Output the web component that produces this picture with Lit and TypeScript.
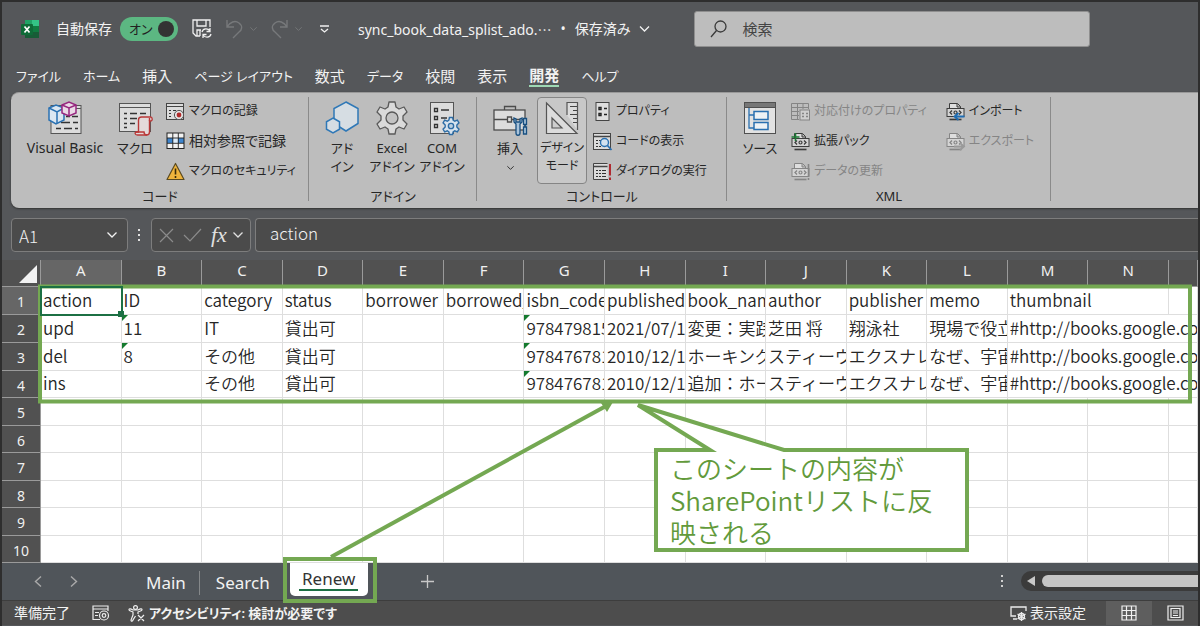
import { LitElement, html, css, svg, nothing, SVGTemplateResult } from "lit";
import { customElement } from "lit/decorators.js";
import { classMap } from "lit/directives/class-map.js";

type Cell = { t: string; span?: number; flag?: boolean };

const COLS = "ABCDEFGHIJKLMN".split("");

const c = (t: string, flag = false, span = 1): Cell => ({ t, flag, span });

const ROWS: Cell[][] = [
  [c("action"), c("ID"), c("category"), c("status"), c("borrower"), c("borrowed_"), c("isbn_code"),
   c("published"), c("book_nam"), c("author"), c("publisher"), c("memo"), c("thumbnail", false, 2), c("")],
  [c("upd"), c("11", true), c("IT"), c("貸出可"), c(""), c(""), c("978479815", true), c("2021/07/1"),
   c("変更：実践"), c("芝田 将"), c("翔泳社"), c("現場で役立"), c("#http://books.google.co", false, 3)],
  [c("del"), c("8", true), c("その他"), c("貸出可"), c(""), c(""), c("978476781", true), c("2010/12/1"),
   c("ホーキング"), c("スティーヴ"), c("エクスナレ"), c("なぜ、宇宙"), c("#http://books.google.co", false, 3)],
  [c("ins"), c(""), c("その他"), c("貸出可"), c(""), c(""), c("978476781", true), c("2010/12/1"),
   c("追加：ホー"), c("スティーヴ"), c("エクスナレ"), c("なぜ、宇宙"), c("#http://books.google.co", false, 3)],
];

const xmlDoc = (dim: boolean, extra: SVGTemplateResult) => {
  const k = dim ? "#858585" : "#3c3c3c";
  return svg`<path d="M3.5 6V1.5h8l3 3V6M11 1.5V5h3.500" fill="#dedede" stroke=${k}/>
    <rect x="1" y="6.500" width="17" height="8" fill="#d4d4d4" stroke=${k}/>
    <path d="M3.500 17.500h12" stroke=${k} stroke-width="1.600"/>
    <path d="M6 8.500 4 10.500l2 2M13 8.500l2 2-2 2" stroke=${k} stroke-width="1.300"/>
    <circle cx="9.500" cy="10.500" r="1.500" stroke=${k} stroke-width="1.200"/>${extra}`;
};

const GEAR = "M14 1h6l1 5 3 2 5-2 3 5-4 4v4l4 4-3 5-5-2-3 2-1 5h-6l-1-5-3-2-5 2-3-5 4-4v-4l-4-4 3-5 5 2 3-2z";

const I: Record<string, SVGTemplateResult> = {
  vb: svg`<rect x="3" y="4.500" width="30" height="28" fill="#dcdcdc" stroke="#555"/><path d="M3 7.500h30" stroke="#555"/>
    <path d="M18 15.500h4m2 0h6M13 21.500h9m3 0h5M8 27.500h5m3 0h8m3 0h3" stroke="#333" stroke-width="1.300"/>
    <path d="M1 7l7-3 8 3v12l-8 4-7-4z" fill="#dbe7f2" stroke="#2b72b3" stroke-width="1.500"/><path d="M1 7l8 4 7-4M9 11v11" stroke="#2b72b3" stroke-width="1.500"/>
    <path d="M14 4l7-3 7 3v8l-7 3-7-3z" fill="#ead9e6" stroke="#97277f" stroke-width="1.500"/><path d="M14 4l7 3 7-3M21 7v8" stroke="#97277f" stroke-width="1.500"/>`,
  macro: svg`<rect x="1.500" y="2.500" width="31" height="28" fill="#dcdcdc" stroke="#555"/><path d="M1.500 6.500h31" stroke="#555"/>
    <path d="M6 12.500h3m3 0h7m3 0h6M6 17.500h3m3 0h7M6 22.500h3m3 0h5M6 26.500h3" stroke="#333" stroke-width="1.300"/>
    <path d="M20.500 31V19c0-2 1-3 3-3h9c2 0 2.500 4 0 4h-1v11c0 2-1 3-3 3h-9c-3 0-3-3-1-3z" fill="#e4dada" stroke="#b93838" stroke-width="1.400"/><path d="M31.500 20v-3M18 31h8c0 2 1 3 3 3" stroke="#b93838" stroke-width="1.400"/>`,
  addin: svg`<path d="M21 1l12 6.500v15L21 30 9 22.500v-15z" fill="#d6dde3" stroke="#2f78b7" stroke-width="1.500"/><path d="M8 17l6.500 3.800v7.400L8 32l-6.500-3.800v-7.400z" fill="#d6dde3" stroke="#2f78b7" stroke-width="1.500"/>`,
  gear: svg`<path d=${GEAR} fill="#dadada" stroke="#595959" stroke-width="1.300" stroke-linejoin="round"/><circle cx="17" cy="17" r="6" fill="#c3c3c3" stroke="#595959" stroke-width="1.300"/>`,
  com: svg`<rect x="5.500" y="1.500" width="23" height="31" fill="#dcdcdc" stroke="#555"/>
    <path d="M9.500 7.500h3v3h-3zM9.500 15.500h3v3h-3zM9.500 23.500h3v3h-3z" stroke="#333" stroke-width="1.300"/><path d="M16 9h8M16 17h6" stroke="#333" stroke-width="1.300"/>
    <g transform="translate(17 16) scale(.53)"><path d=${GEAR} fill="#d7e3ee" stroke="#2d6da6" stroke-width="2.600"/><circle cx="17" cy="17" r="5" fill="#bdd0e0" stroke="#2d6da6" stroke-width="2.600"/></g>`,
  tools: svg`<path d="M11.500 9V5.500h11V9" stroke="#4c4c4c" stroke-width="1.300"/><rect x="1" y="9" width="31" height="20" fill="#dcdcdc" stroke="#4c4c4c" stroke-width="1.300"/>
    <path d="M1 18.500h13m5 0h13M14.500 16h4v5h-4z" stroke="#4c4c4c" stroke-width="1.300"/>
    <path d="M21 17v4l2 2v9c0 3 4 3 4 0v-9l2-2v-4l-2 1v3h-4v-3z" fill="#a9c3da" stroke="#174f80" stroke-width="1.300"/><path d="M30.500 17.500h3v6h-3zM32 23v3m-1.500 0h3v7h-3z" fill="#a9c3da" stroke="#174f80" stroke-width="1.300"/>`,
  design: svg`<path d="M22 14V1.500h10.500V29" fill="#dcdcdc" stroke="#555" stroke-width="1.200"/><path d="M25 5.500h7M28 9.500h4M25 13.500h7M28 17.500h4M28 21.500h4" stroke="#444"/>
    <path d="M1.500 2v30.500H32z" fill="#dcdcdc" stroke="#555" stroke-width="1.200"/><path d="M7 17v10h10z" fill="#cfcfcf" stroke="#555" stroke-width="1.200"/>`,
  source: svg`<rect x="1.500" y="1.500" width="31" height="31" fill="#e2e2e2" stroke="#505050"/><rect x="2" y="2" width="30" height="4" fill="#777"/><path d="M1.500 6.500h31" stroke="#505050"/>
    <path d="M6 7v20h5M6 14h5" stroke="#2a70b0" stroke-width="1.300"/><path d="M11 10.500h14v8H11zM11 21.500h14v7H11z" fill="#eef2f5" stroke="#2a70b0" stroke-width="1.500"/>`,
  record: svg`<rect x=".5" y="1.500" width="17" height="16" fill="#dcdcdc" stroke="#444"/><path d="M.5 4.500h17" stroke="#444"/><path d="M3 8.500h2m2 0h3M3 11.500h2M3 14.500h2" stroke="#333" stroke-width="1.200"/><circle cx="13" cy="13" r="4.600" fill="#e3e3e3" stroke="#555"/><circle cx="13" cy="13" r="2.400" fill="#b22a2a"/>`,
  grid: svg`<rect x="1" y="1" width="17" height="16" fill="#f2f2f2"/><path d="M1 6h17v5H1z" fill="#3f86cf"/><path d="M7 6h5v5H7z" fill="#dcebf8"/><rect x="1" y="1" width="17" height="15.500" stroke="#222"/><path d="M6.800 1v16M12.300 1v16M1 6h17M1 11.300h17" stroke="#222" stroke-width=".9"/>`,
  warn: svg`<path d="M9.500 1.500 18 17.500H1z" fill="#efb43c" stroke="#5a4a20" stroke-width="1.200" stroke-linejoin="round"/><path d="M9.500 6.500v6M9.500 14v2" stroke="#3a2c08" stroke-width="1.600"/>`,
  prop: svg`<rect x="3" y=".5" width="13" height="18" fill="#dedede" stroke="#444"/><path d="M6 5.500h2v2H6zM6 11.500h2v2H6z" stroke="#222" stroke-width="1.400"/><path d="M11 6.500h3M11 12.500h3" stroke="#222" stroke-width="1.500"/>`,
  code: svg`<rect x=".5" y="1.500" width="17" height="16" fill="#dcdcdc" stroke="#444"/><path d="M.5 4.500h17" stroke="#444" stroke-width="1.500"/><path d="M3 8.500h2m1 0h2M3 11.500h2M3 14.500h2m1 0h2" stroke="#333"/><circle cx="11.500" cy="10.500" r="4" fill="#d3e2ef" stroke="#2a70b0" stroke-width="1.400"/><path d="M14.500 13.500l4 4.500" stroke="#2a70b0" stroke-width="1.800"/>`,
  dialog: svg`<path d="M15 17.500H.5v-16h14" fill="#dcdcdc" stroke="#444"/><path d="M.5 4.500h14" stroke="#444" stroke-width="1.500"/><path d="M3 8.500h2m1 0h2m1 0h4M3 11.500h2m1 0h2m1 0h4M3 14.500h2m1 0h2m1 0h4" stroke="#333"/><path d="M17 2v11.500M17 15.500V18" stroke="#b02a30" stroke-width="2"/>`,
  map: svg`<path d="M.5 1.500h17V7M.5 1.500v16H8M.5 5.500h17M.5 9.500H8M.5 13.500H8M6.500 1.500v16M12 1.500V7" stroke="#858585"/><rect x="9" y="8" width="9.500" height="10" fill="#cfcfcf" stroke="#858585"/><path d="M11 11.500h2m2 0h2M11 14.500h2m2 0h2" stroke="#858585" stroke-width="1.400"/>`,
  pack: xmlDoc(false, svg`<path d="M4.500 1v8M.5 5h8" stroke="#1d7a35" stroke-width="1.600"/>`),
  refresh: xmlDoc(true, svg`<path d="M17.500 2v16" stroke="#858585" stroke-width="1.600" stroke-dasharray="12 2"/>`),
  imp: xmlDoc(false, svg`<path d="M18.500 14.500H8.500m4-3.500-4 3.500 4 3.500" stroke="#1f6db3" stroke-width="1.800"/>`),
  exp: xmlDoc(true, svg`<path d="M8 14.500h10m-4-3.500 4 3.500-4 3.500" stroke="#9a9a9a" stroke-width="1.800"/>`),
};

const icon = (name: string, size: number) =>
  html`<svg width=${size} height=${size} viewBox="0 0 ${size} ${size}" fill="none" aria-hidden="true" overflow="visible">${I[name]}</svg>`;

const chevron = (w = 10) =>
  html`<svg width=${w} height="6" viewBox="0 0 10 6" fill="none" stroke="currentColor" stroke-width="1.300" aria-hidden="true"><path d="M.5.5 5 5 9.500.5"/></svg>`;

const shared = css`
  * { box-sizing: border-box; }
  button, input { font: inherit; color: inherit; background: none; border: 0; padding: 0; margin: 0; outline: none; }
  svg { display: block; flex: none; }
`;

@customElement("ribbon-panel")
export class RibbonPanel extends LitElement {
  static styles = [shared, css`
    :host { display: flex; height: 116px; margin-left: 9px; background: #bdbdbd; color: #262626; border-radius: 8px 0 0 8px; box-shadow: 0 1px 2px #333; border-top: 1px solid #999; font-size: 13px; }
    .group { position: relative; flex: none; display: flex; flex-direction: column; padding-top: 3px; }
    .group::after { content: ""; position: absolute; right: 0; top: 4px; bottom: 7px; border-right: 1px solid #8a8a8a; }
    .g-code { width: 298px; } .g-addin { width: 168px; } .g-control { width: 250px; } .g-xml { width: 324px; }
    .body { display: flex; height: 90px; padding-left: 8px; gap: 2px; }
    .g-code .body { padding-left: 11px; }
    .g-addin .body { gap: 0; }
    .caption { text-align: center; line-height: 20px; }
    .big { width: 50px; height: 87px; margin-top: 1px; padding-top: 4px; display: flex; flex-direction: column; align-items: center; white-space: nowrap; line-height: 18px; border-radius: 4px; }
    .big span { margin-top: 4px; text-align: center; white-space: pre-line; }
    .wide { width: 86px; font-size: 14px; }
    .big.on { border: 1px solid #858585; background: #c8c8c8; padding-top: 3px; font-size: 12px; }
    .big .drop { margin-top: 8px; }
    .list { display: flex; flex-direction: column; margin-left: 4px; font-size: 12px; }
    .list.second { margin-left: 17px; }
    .list button { display: flex; align-items: center; gap: 4px; height: 30px; white-space: nowrap; }
    .list button:disabled { color: #858585; }
    .kanji { font-size: 14px; }
  `];

  private big(name: string, label: string, cls: Record<string, boolean> = {}) {
    return html`<button class=${classMap({ big: true, ...cls })}>${icon(name, 34)}<span>${label}</span>
      ${cls.menu ? html`<div class="drop">${chevron(7)}</div>` : nothing}</button>`;
  }
  private small(name: string, label: string, kanji = false, disabled = false) {
    return html`<button ?disabled=${disabled}>${icon(name, 19)}<span class=${classMap({ kanji })}>${label}</span></button>`;
  }

  render() {
    return html`
      <section class="group g-code"><div class="body">
        ${this.big("vb", "Visual Basic", { wide: true })}${this.big("macro", "マクロ")}
        <div class="list">${this.small("record", "マクロの記録")}${this.small("grid", "相対参照で記録", true)}${this.small("warn", "マクロのセキュリティ")}</div>
      </div><div class="caption">コード</div></section>
      <section class="group g-addin"><div class="body">
        ${this.big("addin", "アド\nイン")}${this.big("gear", "Excel\nアドイン")}${this.big("com", "COM\nアドイン")}
      </div><div class="caption">アドイン</div></section>
      <section class="group g-control"><div class="body">
        ${this.big("tools", "挿入", { menu: true })}${this.big("design", "デザイン\nモード", { on: true })}
        <div class="list">${this.small("prop", "プロパティ")}${this.small("code", "コードの表示")}${this.small("dialog", "ダイアログの実行")}</div>
      </div><div class="caption">コントロール</div></section>
      <section class="group g-xml"><div class="body">
        ${this.big("source", "ソース")}
        <div class="list">${this.small("map", "対応付けのプロパティ", false, true)}${this.small("pack", "拡張パック")}${this.small("refresh", "データの更新", false, true)}</div>
        <div class="list second">${this.small("imp", "インポート")}${this.small("exp", "エクスポート", false, true)}</div>
      </div><div class="caption">XML</div></section>`;
  }
}

@customElement("sheet-grid")
export class SheetGrid extends LitElement {
  static styles = [shared, css`
    :host { display: block; background: #fff; color: #262626; overflow: hidden; font: 17px/24px "Noto Sans CJK JP", sans-serif; font-feature-settings: normal; font-weight: 350; }
    table { width: 100%; table-layout: fixed; border-collapse: separate; border-spacing: 0; }
    .c-num { width: 39px; } .c-last { width: 29px; }
    th { background: #515151; color: #f0f0f0; font: 15px/20px "Noto Sans", sans-serif; padding: 0; border-right: 1px solid #9a9a9a; }
    thead th { height: 27px; padding: 0 0 8px; line-height: 16px; border-bottom: 1px solid #9a9a9a; vertical-align: bottom; }
    thead th.sel, tbody th.sel { background: #666; }
    tbody th { border-bottom: 1px solid #9a9a9a; padding: 3px 0 0; font-size: 14px; }
    .corner { position: relative; }
    .corner svg { position: absolute; right: 3px; bottom: 3px; }
    tbody tr { height: 28px; }
    tbody tr:nth-child(even):not(:nth-child(2)) { height: 27px; }
    td { position: relative; padding: 0 0 2px 2px; line-height: 22px; white-space: nowrap; overflow: hidden; border-right: 1px solid #dedede; border-bottom: 1px solid #dedede; }
    .flag::before { content: ""; position: absolute; left: 0; top: 0; border: 3px solid transparent; border-left-color: #147a2e; border-top-color: #147a2e; }
    td.active { outline: 2px solid #1c7044; outline-offset: -1px; overflow: visible; z-index: 1; }
    td.active::after { content: ""; position: absolute; right: -3px; bottom: -3px; width: 6px; height: 6px; background: #1c7044; }
  `];

  render() {
    return html`<table>
      <colgroup><col class="c-num">${COLS.map(() => html`<col>`)}<col class="c-last"></colgroup>
      <thead><tr>
        <th class="corner" aria-label="すべて選択"><svg width="18" height="18"><path d="M18 0v18H0z" fill="#f2f2f2"/></svg></th>
        ${COLS.map((l, i) => html`<th scope="col" class=${classMap({ sel: i === 0 })}>${l}</th>`)}<th></th>
      </tr></thead>
      <tbody>${Array.from({ length: 10 }, (_, r) => html`<tr>
        <th scope="row" class=${classMap({ sel: r === 0 })}>${r + 1}</th>
        ${(ROWS[r] ?? Array.from({ length: 15 }, () => c(""))).map((x, i) =>
          html`<td colspan=${x.span ?? 1} class=${classMap({ flag: !!x.flag, active: r === 0 && i === 0 })}>${x.t}</td>`)}
      </tr>`)}</tbody></table>`;
  }
}

@customElement("app-root")
export class AppRoot extends LitElement {
  static styles = [shared, css`
    :host { display: block; position: relative; min-height: 100vh; overflow: hidden; background: #55575a; color: #f2f2f2; border: 2px solid #2e2e2e; border-width: 2px 2px 1px; font: 14px/20px "Noto Sans", "Noto Sans CJK JP", sans-serif; font-feature-settings: "palt"; }
    .title { display: flex; align-items: center; height: 54px; padding-left: 18px; white-space: nowrap; }
    .autosave { display: flex; align-items: center; gap: 8px; margin: 0 14px 0 16px; }
    .switch { position: relative; width: 58px; height: 24px; border-radius: 12px; background: #5cb782; color: #222; padding: 2px 9px; font-size: 13px; }
    .switch input { appearance: none; position: absolute; right: 4px; top: 4px; width: 16px; height: 16px; border-radius: 50%; background: #333; }
    .dim { display: flex; align-items: center; gap: 7px; color: #77797b; margin-left: 14px; }
    .more { margin-left: 18px; }
    .doc { display: flex; align-items: center; gap: 9px; margin-left: 29px; }
    .ellipsis { font-family: "Noto Sans CJK JP", sans-serif; font-feature-settings: normal; }
    .search { display: flex; align-items: center; gap: 15px; flex: 0 0 396px; height: 36px; margin-left: 44px; padding-left: 15px; background: #bdbdbd; border-radius: 3px; border: 1px solid #8f8f8f; color: #333; }
    .search input { flex: 1; font-size: 15px; }
    .search input::placeholder { color: #444; opacity: 1; }
    .tabs { display: flex; height: 36px; gap: 22px; padding: 8px 0 0 14px; font-size: 13px; }
    .tabs button { height: 23px; white-space: nowrap; }
    .tabs .kanji { font-size: 15px; }
    .tabs .current { font-weight: 700; border-bottom: 2px solid #9fd9b4; }
    .formula { display: flex; height: 52px; padding: 10px 0 8px 9px; font: 17px/24px "Noto Sans CJK JP", sans-serif; font-weight: 300; }
    .box { display: flex; align-items: center; background: #4b4b4b; border: 1px solid #7d7d7d; border-radius: 4px; min-width: 0; }
    .name { width: 117px; padding: 0 9px 0 7px; }
    .name input { flex: 1; min-width: 0; padding-top: 2px; }
    .dots { width: 23px; display: flex; align-items: center; justify-content: center; }
    .fn { width: 100px; gap: 9px; padding: 0 2px 0 7px; color: #8b8b8b; }
    .fn .fx { color: #e0e0e0; display: flex; align-items: center; gap: 5px; font: italic 22px/24px "Liberation Serif", serif; }
    .expr { flex: 1; margin-left: 4px; padding: 0 0 4px 14px; border-radius: 4px 0 0 4px; border-right: 0; }
    .expr input { flex: 1; }
    .sheets { display: flex; align-items: flex-start; height: 37px; background: #50555a; font-size: 17px; }
    .nav { display: flex; gap: 28px; padding: 13px 0 0 32px; color: #aaa; width: 130px; }
    .sheets .tab { height: 24px; margin-top: 8px; padding: 0 13px 0 14px; }
    .sheets .tab + .tab { border-left: 1px solid #85888a; padding: 0 20px 0 16px; }
    .sheets .open { width: 78px; height: 33px; background: #fff; color: #333; border-radius: 0 0 5px 5px; display: flex; justify-content: center; }
    .open span { height: 28px; line-height: 32px; padding: 0 3px; border-bottom: 2px solid #1c7044; }
    .add { margin: 12px 0 0 53px; }
    .scroll { display: flex; align-items: center; gap: 17px; margin: 8px 0 0 auto; }
    .track { display: flex; align-items: center; gap: 7px; width: 177px; height: 20px; padding-left: 6px; border-radius: 10px 0 0 10px; background: #3b3b3b; }
    .thumb { flex: 1; height: 12px; border-radius: 6px 0 0 6px; background: #c4c4c4; }
    .status { display: flex; align-items: center; height: 25px; padding-left: 12px; background: #4d4d4d; border-top: 1px solid #3d3d3d; white-space: nowrap; }
    .status svg { margin-left: 22px; }
    .status .a11y { display: flex; gap: 4px; align-items: center; margin-left: 18px; font-weight: 600; font-size: 13px; }
    .status .a11y svg, .status .view svg, .status .modes svg { margin: 0; }
    .view { display: flex; gap: 3px; align-items: center; margin-left: auto; margin-right: 20px; }
    .modes { display: flex; align-self: stretch; }
    .modes button { width: 46px; display: grid; place-items: center; }
    .modes .on { background: #5e5e5e; }
    .notes { position: absolute; left: -2px; top: -2px; pointer-events: none; }
    .callout { position: absolute; left: 668px; top: 450px; width: 290px; color: #629a3b; font: 26px/32px "Noto Sans CJK JP", sans-serif; font-feature-settings: normal; font-weight: 350; white-space: nowrap; }
  `];

  private tabs: [string, boolean][] = [["ファイル", false], ["ホーム", false], ["挿入", true], ["ページ レイアウト", false], ["数式", true],
    ["データ", false], ["校閲", true], ["表示", true], ["開発", true], ["ヘルプ", false]];

  render() {
    return html`
      <header class="title">
        <svg width="20" height="20" viewBox="0 0 20 20" aria-label="Excel"><path d="M5 1h14v18H5z" fill="#17864a"/><path d="M12 1h7v6h-7z" fill="#34c486"/><path d="M5 1h7v6H5z" fill="#21a366"/><path d="M12 7h7v6h-7z" fill="#107c41"/><path d="M5 13h14v6H5z" fill="#185c37"/><rect x="1" y="5" width="12" height="11" rx="1" fill="#0f6b38"/><path d="M4.500 7.500l5 6M9.500 7.500l-5 6" stroke="#fff" stroke-width="1.700"/></svg>
        <label class="autosave"><span>自動保存</span><span class="switch">オン<input type="checkbox" checked></span></label>
        <button aria-label="上書き保存"><svg width="20" height="20" viewBox="0 0 20 20" fill="none" stroke="#f0f0f0" stroke-width="1.300"><path d="M8 17H4l-3-3V1h17v7M5 1v6h9V1M5 17v-6h4M8 11v6"/><path d="M10 13c1-4 6-4 8-1m0-3v3.500h-3.500M19 15c-1 4-6 4-8 1m0 3v-3.500h3.500"/></svg></button>
        <button class="dim" aria-label="元に戻す"><svg width="17" height="20" viewBox="0 0 17 20" fill="none" stroke="currentColor" stroke-width="1.400"><path d="M1 1v7h7M1 8c3-5 8-7 12-4s3 7 0 9l-6 6"/></svg>${chevron(7)}</button>
        <button class="dim" aria-label="やり直し"><svg width="17" height="20" viewBox="0 0 17 20" fill="none" stroke="currentColor" stroke-width="1.400"><path d="M16 1v7H9M16 8c-3-5-8-7-12-4s-3 7 0 9l6 6"/></svg>${chevron(7)}</button>
        <button class="more" aria-label="カスタマイズ"><svg width="9" height="8" viewBox="0 0 9 8" fill="none" stroke="#f0f0f0" stroke-width="1.300"><path d="M0 1h9M1 4l3.500 3L8 4"/></svg></button>
        <button class="doc"><span>sync_book_data_splist_ado.<span class="ellipsis" lang="ja">…</span></span><span>•</span><span>保存済み</span>${chevron(11)}</button>
        <label class="search"><svg width="17" height="18" viewBox="0 0 17 18" fill="none" stroke="#3a3a3a" stroke-width="1.300"><circle cx="10.500" cy="6.500" r="5.500"/><path d="M6.500 10.500 1 17"/></svg><input type="search" placeholder="検索" aria-label="検索"></label>
      </header>
      <nav class="tabs">${this.tabs.map(([t, kanji]) => html`<button class=${classMap({ kanji, current: t === "開発" })}>${t}</button>`)}</nav>
      <ribbon-panel></ribbon-panel>
      <div class="formula">
        <label class="box name"><input value="A1" aria-label="名前ボックス">${chevron(12)}</label>
        <div class="dots"><svg width="3" height="13" fill="#e0e0e0"><path d="M0 0h2v2H0zM0 5h2v2H0zM0 10h2v2H0z"/></svg></div>
        <div class="box fn">
          <button aria-label="キャンセル"><svg width="15" height="15" viewBox="0 0 15 15" fill="none" stroke="currentColor" stroke-width="1.200"><path d="M1 1l13 13M14 1 1 14"/></svg></button>
          <button aria-label="入力"><svg width="19" height="14" viewBox="0 0 19 14" fill="none" stroke="currentColor" stroke-width="1.200"><path d="M1 7l6 6L18 1"/></svg></button>
          <button class="fx" aria-label="関数の挿入"><span>fx</span>${chevron(12)}</button>
        </div>
        <div class="box expr"><input value="action" aria-label="数式バー"></div>
      </div>
      <sheet-grid></sheet-grid>
      <div class="sheets">
        <div class="nav">
          <button aria-label="前のシート"><svg width="8" height="11" fill="none" stroke="currentColor" stroke-width="1.400"><path d="M7 .5 1.500 5.500 7 10.500"/></svg></button>
          <button aria-label="次のシート"><svg width="8" height="11" fill="none" stroke="currentColor" stroke-width="1.400"><path d="M1 .5l5.500 5L1 10.500"/></svg></button>
        </div>
        <button class="tab">Main</button><button class="tab">Search</button>
        <button class="open"><span>Renew</span></button>
        <button class="add" aria-label="新しいシート"><svg width="13" height="13" stroke="#c8c8c8" stroke-width="1.300"><path d="M6.500 0v13M0 6.500h13"/></svg></button>
        <div class="scroll"><svg width="3" height="13" fill="#d0d0d0"><path d="M0 0h2v2H0zM0 5h2v2H0zM0 10h2v2H0z"/></svg>
          <div class="track"><svg width="8" height="10"><path d="M8 0v10L0 5z" fill="#c8c8c8"/></svg><div class="thumb"></div></div></div>
      </div>
      <footer class="status"><span>準備完了</span>
        <svg width="18" height="16" viewBox="0 0 18 16" fill="none" stroke="#ececec" stroke-width="1.200"><path d="M8 14.500H1V1h15v5M1 4h15M3 7.500h4M3 10.500h3"/><circle cx="12" cy="10.500" r="4.500"/><circle cx="12" cy="10.500" r="1.800"/></svg>
        <button class="a11y"><svg width="17" height="17" viewBox="0 0 17 17" fill="none" stroke="#f0f0f0" stroke-width="1.200"><circle cx="7.500" cy="2.500" r="1.900"/><path d="M1 5c0-2 2-1 4 0h5c2-1 4-2 4 0 0 1-3 1.500-4 2v2M1 5c0 1 3 1.500 4 2v3l-2 5c0 2 2 1 2 0l2.500-4M10 10l6 6M16 10l-6 6"/></svg>アクセシビリティ: 検討が必要です</button>
        <button class="view"><svg width="17" height="17" viewBox="0 0 17 17" fill="none" stroke="#ececec" stroke-width="1.300"><path d="M6 11H1V2h15v4M3 14h4"/><circle cx="11.500" cy="11.500" r="3"/><path d="M11.500 7v9M7.500 9l8 5M7.500 14l8-5"/></svg>表示設定</button>
        <div class="modes">
          <button class="on" aria-label="標準"><svg width="16" height="16" fill="none" stroke="#f0f0f0" stroke-width="1.200"><path d="M1 1h14v14H1zM5.500 1v14M10.500 1v14M1 5.500h14M1 10.500h14"/></svg></button>
          <button aria-label="ページ レイアウト"><svg width="17" height="16" fill="none" stroke="#f0f0f0" stroke-width="1.200"><path d="M1 1h15v14H1zM4 3.500h9v9H4zM6 6h5M6 8h5M6 10.500h5"/></svg></button>
        </div>
      </footer>
      <svg class="notes" width="1200" height="626" fill="none" stroke="#74a852" aria-hidden="true">
        <rect x="40" y="286.500" width="1150" height="115" stroke-width="4"/>
        <rect x="285" y="559" width="90" height="42" stroke-width="4"/>
        <path d="M331 557 606 406" stroke-width="4"/><path d="M613 402l-6 10-6-9z" fill="#74a852" stroke="none"/>
        <path d="M656 450h54L638 405 784 450h183v100H656z" fill="#fff" stroke-width="4"/>
      </svg>
      <div class="callout">このシートの内容が<br>SharePointリストに反<br>映される</div>`;
  }
}
